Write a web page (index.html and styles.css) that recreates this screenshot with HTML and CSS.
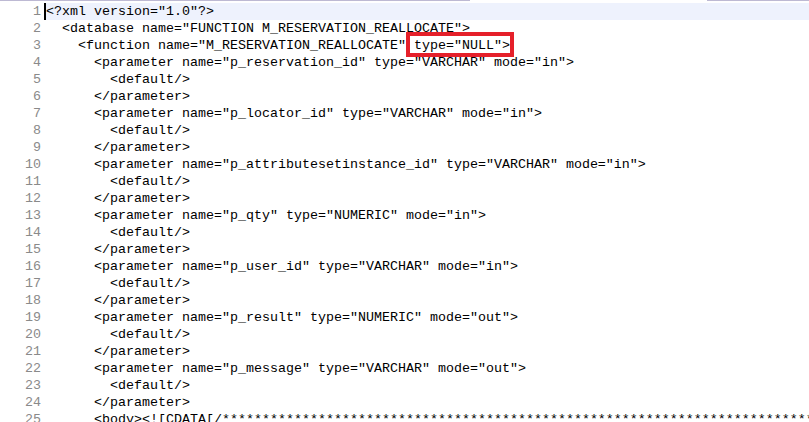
FILE: index.html
```html
<!DOCTYPE html>
<html lang="en">
<head>
  <meta charset="UTF-8" />
  <title>M_RESERVATION_REALLOCATE.xml</title>
  <link rel="stylesheet" href="styles.css">
</head>
<body>
  <div class="topbar">
    <div class="seg seg-left"></div>
    <div class="seg seg-gap"></div>
    <div class="seg seg-right"></div>
  </div>

  <div class="editor">
    <div class="row current"><span class="num">1</span><span class="code">&lt;?xml version="1.0"?&gt;</span></div>
    <div class="row"><span class="num">2</span><span class="code">  &lt;database name="FUNCTION M_RESERVATION_REALLOCATE"&gt;</span></div>
    <div class="row"><span class="num">3</span><span class="code">    &lt;function name="M_RESERVATION_REALLOCATE"<span class="mark"> type="NULL"&gt;</span></span></div>
    <div class="row"><span class="num">4</span><span class="code">      &lt;parameter name="p_reservation_id" type="VARCHAR" mode="in"&gt;</span></div>
    <div class="row"><span class="num">5</span><span class="code">        &lt;default/&gt;</span></div>
    <div class="row"><span class="num">6</span><span class="code">      &lt;/parameter&gt;</span></div>
    <div class="row"><span class="num">7</span><span class="code">      &lt;parameter name="p_locator_id" type="VARCHAR" mode="in"&gt;</span></div>
    <div class="row"><span class="num">8</span><span class="code">        &lt;default/&gt;</span></div>
    <div class="row"><span class="num">9</span><span class="code">      &lt;/parameter&gt;</span></div>
    <div class="row"><span class="num">10</span><span class="code">      &lt;parameter name="p_attributesetinstance_id" type="VARCHAR" mode="in"&gt;</span></div>
    <div class="row"><span class="num">11</span><span class="code">        &lt;default/&gt;</span></div>
    <div class="row"><span class="num">12</span><span class="code">      &lt;/parameter&gt;</span></div>
    <div class="row"><span class="num">13</span><span class="code">      &lt;parameter name="p_qty" type="NUMERIC" mode="in"&gt;</span></div>
    <div class="row"><span class="num">14</span><span class="code">        &lt;default/&gt;</span></div>
    <div class="row"><span class="num">15</span><span class="code">      &lt;/parameter&gt;</span></div>
    <div class="row"><span class="num">16</span><span class="code">      &lt;parameter name="p_user_id" type="VARCHAR" mode="in"&gt;</span></div>
    <div class="row"><span class="num">17</span><span class="code">        &lt;default/&gt;</span></div>
    <div class="row"><span class="num">18</span><span class="code">      &lt;/parameter&gt;</span></div>
    <div class="row"><span class="num">19</span><span class="code">      &lt;parameter name="p_result" type="NUMERIC" mode="out"&gt;</span></div>
    <div class="row"><span class="num">20</span><span class="code">        &lt;default/&gt;</span></div>
    <div class="row"><span class="num">21</span><span class="code">      &lt;/parameter&gt;</span></div>
    <div class="row"><span class="num">22</span><span class="code">      &lt;parameter name="p_message" type="VARCHAR" mode="out"&gt;</span></div>
    <div class="row"><span class="num">23</span><span class="code">        &lt;default/&gt;</span></div>
    <div class="row"><span class="num">24</span><span class="code">      &lt;/parameter&gt;</span></div>
    <div class="row"><span class="num">25</span><span class="code">      &lt;body&gt;&lt;![CDATA[/**************************************************************************</span></div>
  </div>
</body>
</html>
```

FILE: styles.css
```css
html, body {
  margin: 0;
  padding: 0;
  background: #fff;
  overflow: hidden;
}
body {
  width: 809px;
  height: 422px;
  font-family: "Liberation Mono", "DejaVu Sans Mono", monospace;
  font-size: 13.33px;
  color: #000;
}
.topbar {
  display: flex;
  height: 1px;
  margin-bottom: 2px;
}
.seg-left {
  width: 470px;
  background: #bdb9d3;
}
.seg-gap {
  flex: 1;
}
.seg-right {
  width: 102px;
  background: #bdb9d3;
}
.editor {
  display: flex;
  flex-direction: column;
  height: 419px;
  overflow: hidden;
}
.row {
  display: flex;
  flex: none;
  height: 17px;
  line-height: 17px;
  white-space: pre;
}
.num {
  flex: none;
  width: 41px;
  padding-right: 3px;
  text-align: right;
  color: #8a8a8a;
}
.code {
  flex: 1;
  min-width: 0;
  padding-left: 2px;
}
.row.current .code {
  background: #eef2fd;
  border-left: 2px solid #000;
  padding-left: 0;
}
.mark {
  position: relative;
}
.mark::after {
  content: "";
  position: absolute;
  top: -6px;
  bottom: -4px;
  left: 0;
  right: -4px;
  border: 4px solid #e5202a;
}
```
